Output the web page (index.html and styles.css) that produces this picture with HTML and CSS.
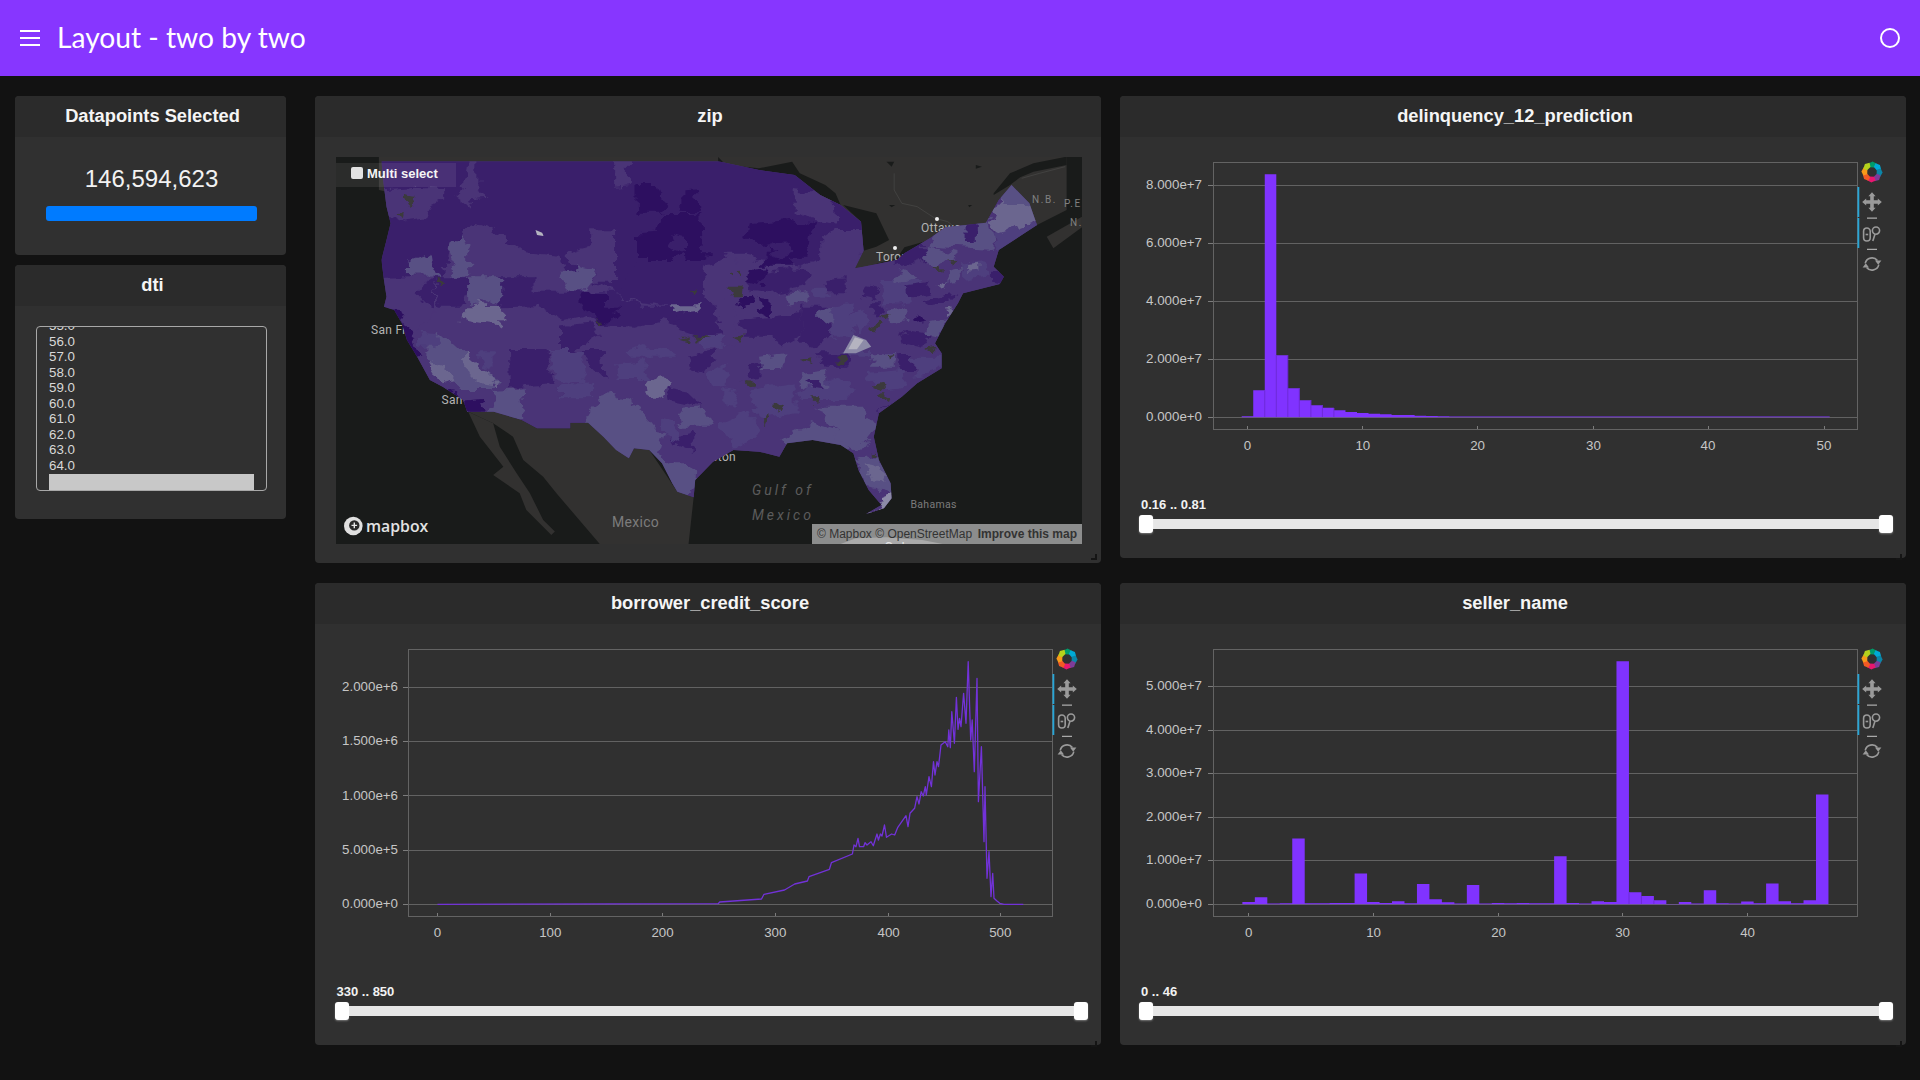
FILE: index.html
```html
<!DOCTYPE html>
<html lang="en">
<head>
<meta charset="utf-8">
<title>Layout - two by two</title>
<link rel="stylesheet" href="styles.css">
</head>
<body>
<svg class="defs" aria-hidden="true">
  <defs>
    <filter id="rough" x="0" y="0" width="1" height="1" color-interpolation-filters="sRGB">
      <feTurbulence type="fractalNoise" baseFrequency=".035" numOctaves="3" seed="7" result="n"/>
      <feDisplacementMap in="SourceGraphic" in2="n" scale="34" xChannelSelector="R" yChannelSelector="G"/>
    </filter>
    <clipPath id="usclip">
      <polygon points="140,214 800,214 880,240 950,255 1000,315 1040,345 1080,395 1085,482 1068,535 1085,530 1150,510 1165,490 1215,445 1245,412 1325,398 1350,330 1375,285 1410,340 1425,405 1350,480 1340,530 1360,560 1352,582 1280,610 1270,640 1245,700 1225,760 1238,790 1238,835 1190,880 1160,920 1115,970 1105,1040 1115,1110 1138,1180 1140,1225 1125,1255 1090,1272 1120,1245 1095,1200 1075,1140 1065,1090 1040,1065 985,1050 935,1060 920,1100 880,1085 830,1080 790,1115 755,1170 752,1222 720,1205 710,1180 690,1120 665,1080 635,1075 625,1105 600,1080 575,1040 545,998 510,998 510,1015 445,1015 415,990 360,965 308,965 300,930 260,890 235,870 210,800 190,750 180,700 165,660 145,650 150,620 145,570 140,510 150,450 158,400 150,350 145,290"/>
    </clipPath>
  </defs>
  <symbol id="toolbar" viewBox="0 0 40 130" overflow="visible">
    <rect class="tb-active" x="0" y="29" width="1.8" height="30"/>
    <rect class="tb-active" x="0" y="60" width="1.8" height="30"/>
    <rect class="tb-sep" x="9.5" y="59.6" width="10" height="1"/>
    <rect class="tb-sep" x="9.5" y="90.8" width="10" height="1"/>
    <g transform="translate(14.5 14)">
      <path fill="#009a6a" d="M-3.6-8.6 .6-10.6 4.8-8.2 2.4-4.6-2.2-4.8Z"/>
      <path fill="#00aad6" d="M-3.6-8.6 .6-10.6 4.8-8.2 2.4-4.6-2.2-4.8Z" transform="rotate(45)"/>
      <path fill="#0b86a8" d="M-3.6-8.6 .6-10.6 4.8-8.2 2.4-4.6-2.2-4.8Z" transform="rotate(90)"/>
      <path fill="#7d3c98" d="M-3.6-8.6 .6-10.6 4.8-8.2 2.4-4.6-2.2-4.8Z" transform="rotate(135)"/>
      <path fill="#e8176f" d="M-3.6-8.6 .6-10.6 4.8-8.2 2.4-4.6-2.2-4.8Z" transform="rotate(180)"/>
      <path fill="#f15a24" d="M-3.6-8.6 .6-10.6 4.8-8.2 2.4-4.6-2.2-4.8Z" transform="rotate(225)"/>
      <path fill="#f79a1a" d="M-3.6-8.6 .6-10.6 4.8-8.2 2.4-4.6-2.2-4.8Z" transform="rotate(270)"/>
      <path fill="#b5d21c" d="M-3.6-8.6 .6-10.6 4.8-8.2 2.4-4.6-2.2-4.8Z" transform="rotate(315)"/>
    </g>
    <path class="tb-icon" transform="translate(14.5 44)" d="M0-9.8 3.6-5.8H1.8V-1.8H5.8V-3.6L9.8 0 5.8 3.6V1.8H1.8V5.8H3.6L0 9.8-3.6 5.8H-1.8V1.8H-5.8V3.6L-9.8 0-5.8-3.6V-1.8H-1.8V-5.8H-3.6Z"/>
    <g class="tb-line" transform="translate(14.5 75)">
      <rect x="-8.4" y="-5" width="6.6" height="13" rx="3.3"/>
      <path d="M-6.4 1.5H-3.8"/>
      <circle cx="4" cy="-2.4" r="3.6"/>
      <path d="M3 1.2 .8 8"/>
    </g>
    <g class="tb-line" transform="translate(14.5 106)">
      <path d="M-6.8-.6A6.9 6.9 0 0 1 5.4-3.4"/>
      <path d="M6.8 .6A6.9 6.9 0 0 1-5.4 3.4"/>
      <path class="tb-icon" d="M3-3.6H9.4L6.2 .8Z"/>
      <path class="tb-icon" d="M-3 3.6H-9.4L-6.2-.8Z"/>
    </g>
  </symbol>
</svg>

<header class="topbar">
  <div class="burger"><span></span><span></span><span></span></div>
  <h1 class="app-title">Layout - two by two</h1>
  <div class="status-dot"></div>
</header>

<main class="page">
  <aside class="side">
    <section class="card card-count">
      <h2 class="card-head">Datapoints Selected</h2>
      <div class="count-body">
        <div class="count-num">146,594,623</div>
        <div class="count-bar"></div>
      </div>
    </section>
    <section class="card card-dti">
      <h2 class="card-head">dti</h2>
      <div class="dti-body">
        <div class="listbox">
          <div class="opt">55.0</div>
          <div class="opt">56.0</div>
          <div class="opt">57.0</div>
          <div class="opt">58.0</div>
          <div class="opt">59.0</div>
          <div class="opt">60.0</div>
          <div class="opt">61.0</div>
          <div class="opt">62.0</div>
          <div class="opt">63.0</div>
          <div class="opt">64.0</div>
          <div class="opt-sel"></div>
        </div>
      </div>
    </section>
  </aside>

  <div class="grid">
    <section class="card card-zip">
      <h2 class="card-head">zip</h2>
      <div class="map-body">
        <div class="map">
          <svg class="map-svg" width="746" height="387" viewBox="0 0 746 387">
            <rect class="water" width="746" height="387"/>
            <g transform="matrix(.5102 0 0 .3333 -26 -67)">
              <polygon class="land" points="135,201 1483,201 1483,360 1425,405 1240,500 1000,600 135,300"/>
              <polygon class="water" points="1340,310 1372,250 1418,220 1483,200 1483,225 1418,245 1392,262 1372,285 1340,315"/>
              <polygon class="land" points="1444,440 1513,380 1513,412 1457,475"/>
              <polygon class="water" points="800,201 815,225 880,235 945,215 960,250 1010,285 1030,310 1040,345 1000,315 950,258 880,242 800,216"/>
              <polygon class="water" points="1045,345 1110,370 1135,450 1110,470 1085,482 1080,395"/>
              <polygon class="water" points="1065,560 1085,545 1150,515 1200,475 1215,450 1165,472 1150,505 1090,530 1068,535"/>
              <polygon class="water" points="1130,215 1145,215 1140,230"/>
              <polygon class="water" points="1305,225 1317,230 1305,236"/>
              <polygon class="water" points="1135,345 1147,345 1140,352"/>
              <polygon class="water" points="1290,345 1298,345 1292,352"/>
              <path class="border" d="M1145 250V300L1160 340 1190 350 1225 385 1250 395 1258 405M1395 265 1430 250 1480 230"/>
              <polygon class="land" points="310,965 360,965 415,990 445,1015 510,1015 510,998 545,998 625,1105 635,1075 665,1080 720,1205 752,1222 742,1362 568,1362 483,1210 457,1160 418,1110 398,1040 359,1000"/>
              <polygon class="land" points="310,965 359,1000 372,1070 405,1150 431,1210 457,1290 480,1325 473,1335 424,1260 411,1210 359,1155 379,1130 333,1040"/>
              <polygon class="cuba" points="1040,1362 1070,1345 1130,1342 1200,1350 1240,1362"/>
            </g>
            <text class="ml" x="35" y="177">San Francisco</text>
            <text class="ml" x="105.6" y="247">San Diego</text>
            <text class="ml" x="585" y="75">Ottawa</text>
            <text class="ml" x="540" y="104">Toronto</text>
            <text class="ml ml-end" x="400" y="304">Houston</text>
            <text class="ml ml-big" x="276" y="370">Mexico</text>
            <text class="ml ml-sea" x="416" y="338">Gulf of</text>
            <text class="ml ml-sea" x="416" y="363">Mexico</text>
            <text class="ml ml-small" x="574.5" y="351">Bahamas</text>
            <text class="ml ml-prov" x="696" y="46">N.B.</text>
            <text class="ml ml-prov" x="728" y="50">P.E.I.</text>
            <text class="ml ml-prov" x="734" y="69">N.S.</text>
            <text class="ml ml-cuba" x="548" y="396">Cuba</text>
            <circle class="city" cx="601" cy="62" r="2"/>
            <circle class="city" cx="559" cy="91" r="2"/>
            <g transform="matrix(.5102 0 0 .3333 -26 -67)">
              <rect class="c2" x="130" y="205" width="1310" height="1075" clip-path="url(#usclip)"/>
              <g clip-path="url(#usclip)">
                <g filter="url(#rough)">
                  <rect class="c2" x="60" y="130" width="1460" height="1220"/>
                  <polygon class="c1" points="100,180 800,180 880,220 950,235 1000,295 1040,325 1120,395 1120,482 1000,510 960,530 830,490 770,540 775,600 600,605 550,575 500,545 490,500 420,490 360,420 320,400 300,432 270,470 262,560 100,565"/>
                  <polygon class="c2" points="210,290 265,295 265,320 240,340 230,385 175,395 120,350 120,300"/>
                  <polygon class="c2" points="310,200 330,200 330,300 350,320 320,325 310,350 285,320 300,300"/>
                  <polygon class="c2" points="598,200 625,200 625,285 598,290"/>
                  <polygon class="c2" points="950,300 1025,315 1030,400 985,390 950,360"/>
                  <polygon class="c2" points="1030,420 1100,420 1100,480 1060,510 1000,510 1000,450"/>
                  <polygon class="c2" points="320,400 360,420 420,490 490,500 500,545 560,540 550,600 445,605 445,560 310,560 300,432"/>
                  <polygon class="c2" points="505,490 555,470 555,418 598,418 598,575 555,575 560,540 510,525"/>
                  <polygon class="c4" points="190,515 240,488 245,540 258,560 190,560"/>
                  <polygon class="c4" points="270,470 300,432 310,490 310,560 282,560"/>
                  <polygon class="c4" points="490,545 525,540 515,525 560,540 545,600 510,605"/>
                  <polygon class="c0" points="638,282 680,282 690,320 700,345 690,368 640,368 638,330"/>
                  <polygon class="c0" points="728,298 758,295 762,370 728,368"/>
                  <polygon class="c0" points="690,372 765,372 768,490 785,490 760,515 735,520 730,490 712,510 645,510 645,430 680,425"/>
                  <polygon class="c1" points="700,430 735,440 735,490 712,480"/>
                  <polygon class="c0" points="860,400 940,390 975,405 990,395 975,500 945,500 945,530 880,530 905,490 905,460 875,465 855,440"/>
                  <polygon class="c1" points="905,465 940,460 945,495 915,500"/>
                  <polygon class="c2" points="818,488 858,488 840,525"/>
                  <polygon class="c2" points="120,565 225,562 240,640 240,690 205,720 190,720 165,660 120,650"/>
                  <polygon class="c1" points="243,562 310,562 310,605 290,650 250,650"/>
                  <polygon class="c1" points="205,600 243,562 243,650 230,640"/>
                  <polygon class="c4" points="310,562 375,562 375,645 330,628 310,650"/>
                  <polygon class="c5" points="330,625 340,648 375,648 375,710 293,690 315,650"/>
                  <polygon class="c1" points="375,562 442,562 442,652 375,655"/>
                  <polygon class="c1" points="442,605 530,605 530,660 555,670 500,690 440,640"/>
                  <polygon class="c2" points="598,605 645,605 645,650 605,650"/>
                  <polygon class="c1" points="530,605 600,605 645,650 720,650 720,700 690,690 640,710 570,705 530,660"/>
                  <polygon class="c1" points="645,510 770,510 775,600 790,650 810,700 810,730 760,740 720,720 715,650 645,640 600,605"/>
                  <polygon class="c0" points="530,605 580,605 580,650 605,650 605,680 570,705 555,670 530,660"/>
                  <polygon class="c2" points="768,600 790,600 830,650 840,760 815,770 790,640"/>
                  <polygon class="c1" points="490,710 555,700 568,740 520,780 490,780"/>
                  <polygon class="c5" points="710,646 760,646 760,665 735,670 710,656"/>
                  <polygon class="c3" points="770,735 815,735 815,778 770,778"/>
                  <polygon class="c0" points="840,618 868,618 862,650 845,655"/>
                  <polygon class="c0" points="880,620 900,625 902,680 885,670"/>
                  <polygon class="c1" points="845,690 965,670 965,740 930,770 905,740 850,740"/>
                  <polygon class="c1" points="860,555 950,535 975,540 975,590 900,610 860,600"/>
                  <polygon class="c0" points="860,540 895,535 880,585 855,575"/>
                  <polygon class="c1" points="1010,570 1050,565 1050,610 1015,610"/>
                  <polygon class="c3" points="990,590 1010,590 1015,625 990,620"/>
                  <polygon class="c1" points="965,650 1015,650 1020,740 990,770 965,760"/>
                  <polygon class="c1" points="1085,580 1115,590 1110,630 1085,620"/>
                  <polygon class="c3" points="1020,650 1070,640 1060,740 1020,740"/>
                  <polygon class="c4" points="250,720 300,790 370,880 360,900 300,900 270,850 230,810 230,770"/>
                  <polygon class="c5" points="300,785 370,885 330,880 310,850 300,820"/>
                  <polygon class="c5" points="235,815 265,830 285,870 260,880"/>
                  <polygon class="c3" points="210,725 255,730 245,770 215,770"/>
                  <polygon class="c0" points="140,655 178,660 195,720 215,790 205,800 165,730"/>
                  <polygon class="c0" points="220,900 290,910 300,935 335,930 345,965 300,965 290,925"/>
                  <polygon class="c3" points="335,790 358,790 358,840 340,830"/>
                  <polygon class="c1" points="390,780 468,780 468,830 478,880 420,885 392,895"/>
                  <polygon class="c3" points="468,780 530,780 545,880 490,870 480,860"/>
                  <polygon class="c3" points="490,880 555,880 555,925 490,925"/>
                  <polygon class="c1" points="530,780 572,780 575,860 555,830"/>
                  <polygon class="c3" points="625,780 650,765 700,780 720,800 625,800"/>
                  <polygon class="c1" points="740,800 795,780 790,810 770,850 745,835"/>
                  <polygon class="c3" points="780,850 815,820 815,890 790,895"/>
                  <polygon class="c4" points="360,900 415,895 420,985 350,985"/>
                  <polygon class="c5" points="655,870 690,855 705,880 690,925 660,910"/>
                  <polygon class="c1" points="700,895 740,905 770,950 705,930"/>
                  <polygon class="c4" points="530,1010 580,905 620,930 650,965 690,1040 680,1090 710,1120 740,1120 770,1170 730,1240 660,1120 620,1120 575,1060"/>
                  <polygon class="c1" points="705,1045 750,1030 755,1085 710,1060"/>
                  <polygon class="c3" points="690,985 720,1000 730,1060 690,1040"/>
                  <polygon class="c3" points="810,900 840,910 830,950 810,940"/>
                  <polygon class="c4" points="920,1050 985,1000 1030,1020 1060,1090 985,1070 935,1080"/>
                  <polygon class="c3" points="860,900 950,880 950,970 880,990"/>
                  <polygon class="c3" points="955,900 1040,860 1075,900 1040,930 960,930"/>
                  <polygon class="c4" points="1000,950 1080,950 1110,1010 1070,1090 1040,1060"/>
                  <polygon class="c3" points="800,1000 860,960 880,1040 830,1070"/>
                  <polygon class="c3" points="1040,780 1100,780 1095,800 1040,800"/>
                  <polygon class="c1" points="1000,790 1060,790 1055,830 1005,830"/>
                  <polygon class="c1" points="1155,795 1180,795 1180,840 1155,840"/>
                  <polygon class="c3" points="1090,850 1160,840 1170,890 1120,900"/>
                  <polygon class="c4" points="1060,1110 1110,1095 1150,1170 1150,1215 1095,1190"/>
                  <polygon class="c5" points="1085,1120 1120,1130 1130,1175 1100,1170"/>
                  <polygon class="c2" points="1080,1195 1135,1210 1125,1260 1105,1240"/>
                  <polygon class="c6" points="1118,1225 1150,1205 1145,1245 1125,1265"/>
                  <polygon class="c6" points="1080,1285 1130,1250 1130,1270"/>
                  <polygon class="c1" points="1110,975 1140,935 1120,965"/>
                  <polygon class="c5" points="1350,340 1375,265 1425,340 1425,395 1345,430 1335,395"/>
                  <polygon class="c4" points="1355,270 1425,310 1405,345 1355,345"/>
                  <polygon class="c3" points="1430,395 1440,420 1350,490 1340,430"/>
                  <polygon class="c4" points="1240,400 1330,380 1340,440 1340,480 1215,470"/>
                  <polygon class="c1" points="1285,400 1305,400 1305,450 1285,450"/>
                  <polygon class="c1" points="1150,470 1205,465 1205,510 1150,530"/>
                  <polygon class="c4" points="1210,470 1270,490 1230,540 1200,500"/>
                  <polygon class="c3" points="1120,570 1200,570 1180,640 1130,650"/>
                  <polygon class="c1" points="1160,590 1210,580 1220,610 1180,620"/>
                  <polygon class="c1" points="1205,630 1270,610 1250,640 1210,650"/>
                  <polygon class="c3" points="1280,520 1320,510 1330,560 1280,570"/>
                  <polygon class="c5" points="1290,520 1310,515 1310,545 1290,548"/>
                  <polygon class="c1" points="1335,545 1370,545 1370,590 1335,575"/>
                  <polygon class="c0" points="1180,680 1200,670 1205,700 1185,705"/>
                  <polygon class="c5" points="1240,660 1260,655 1245,682"/>
                  <polygon class="c5" points="1230,590 1250,575 1245,600"/>
                  <polygon class="c3" points="1060,680 1085,660 1095,700 1070,730"/>
                  <polygon class="c1" points="1160,720 1210,730 1200,770 1170,760"/>
                  <polygon class="c4" points="1130,660 1165,650 1170,690 1135,700"/>
                  <polygon class="c4" points="1215,700 1250,690 1235,740 1205,735"/>
                  <polygon class="c4" points="1140,560 1170,540 1185,565 1150,585"/>
                  <polygon class="c4" points="1250,540 1280,530 1270,570 1245,575"/>
                  <polygon class="c1" points="1100,640 1125,640 1120,680 1100,675"/>
                  <polygon class="c4" points="1000,660 1020,650 1025,700 1000,710"/>
                  <polygon class="c4" points="930,610 975,600 975,640 935,650"/>
                  <polygon class="c4" points="880,800 930,790 925,840 885,840"/>
                  <polygon class="c4" points="1100,790 1150,790 1145,830 1105,830"/>
                  <polygon class="c4" points="960,850 1010,840 1010,890 965,890"/>
                  <polygon class="c4" points="720,960 770,950 790,1010 730,1010"/>
                  <polygon class="c1" points="975,870 1005,870 1000,895 980,890"/>
                  <polygon class="c3" points="1180,800 1235,800 1230,850 1185,860"/>
                  <polygon class="c3" points="600,820 660,810 660,870 605,870"/>
                  <polygon class="c1" points="860,830 885,820 885,860 860,865"/>
                  <polygon class="c4" points="1150,470 1165,470 1165,490 1150,490"/>
                  <polygon class="h" points="185,315 205,320 200,350 190,345"/>
                  <polygon class="h" points="165,370 176,375 174,388"/>
                  <polygon class="h" points="248,565 256,565 256,585 250,585"/>
                  <polygon class="h" points="822,590 848,590 846,616 820,616"/>
                  <polygon class="h" points="815,545 825,545 822,560"/>
                  <polygon class="h" points="835,550 848,548 842,562"/>
                  <polygon class="h" points="742,605 758,607 752,622"/>
                  <polygon class="h" points="725,750 745,742 742,758"/>
                  <polygon class="h" points="755,735 778,740 760,752"/>
                  <polygon class="h" points="828,742 848,733 845,755"/>
                  <polygon class="h" points="1032,795 1048,795 1045,825 1032,825"/>
                  <polygon class="h" points="852,875 866,878 862,892"/>
                  <polygon class="h" points="980,925 1000,925 996,942"/>
                  <polygon class="h" points="905,940 925,935 918,965"/>
                  <polygon class="h" points="885,990 905,975 895,1005"/>
                  <polygon class="h" points="1095,710 1115,695 1108,728"/>
                  <polygon class="h" points="1120,680 1138,672 1128,695"/>
                  <polygon class="h" points="1222,535 1238,528 1238,545"/>
                  <polygon class="h" points="1252,505 1270,510 1262,525"/>
                  <polygon class="h" points="1208,772 1228,768 1224,788"/>
                  <polygon class="h" points="1100,885 1122,878 1126,905"/>
                  <polygon class="h" points="1110,915 1130,912 1125,930"/>
                  <polygon class="h" points="960,812 985,805 980,822"/>
                  <polygon class="h" points="1125,795 1148,792 1132,812"/>
                  <polygon class="h" points="562,692 576,692 574,704"/>
                  <polygon class="h" points="1100,1090 1112,1088 1110,1100"/>
                </g>
              </g>
              <polygon class="c7" points="1045,790 1065,735 1090,750 1100,770 1070,790"/>
              <polygon class="c8" points="1068,742 1085,750 1072,778 1055,778"/>
              <polygon class="c8" points="442,420 455,428 458,438 445,435"/>
            </g>
            <g transform="translate(17.3 369)">
              <circle class="mb-ring" r="9.3"/>
              <circle class="mb-in" cx="1" cy="-.6" r="5.2"/>
              <path class="mb-plus" d="M1-3.4V2.2M-1.8-.6H3.8"/>
            </g>
            <text class="mb-word" x="30" y="374.5">mapbox</text>
          </svg>
          <div class="multi"><span class="multi-box"></span><span>Multi select</span></div>
          <div class="attrib"><span>© Mapbox © OpenStreetMap</span><b>Improve this map</b></div>
        </div>
      </div>
      <div class="resize-grip"></div>
    </section>

    <section class="card card-chart">
      <h2 class="card-head">delinquency_12_prediction</h2>
      <svg class="plot" width="786" height="360" viewBox="1 0 786 360">
        <path class="grid-l" d="M94 48H738M94 106.3H738M94 164.3H738M94 222.3H738M94 280.3H738"/>
        <path class="tick-l" d="M89 48H94M89 106.3H94M89 164.3H94M89 222.3H94M89 280.3H94M128.5 289V292M243.8 289V292M358.6 289V292M474.5 289V292M589 289V292M705 289V292"/>
        <rect class="frame" x="94.5" y="25.5" width="644" height="267"/>
        <path class="bars" d="M122.7 280.3V279.3h11.53V253.3h11.53V37.3h11.53V218.3h11.53V251.3h11.53V263.3h11.53V268.3h11.53V270.7h11.53V273.3h11.53V275h11.53V276h11.53V276.7h11.53V277.3h11.53V278h11.53V278h11.53V278.7h11.53V279h11.53V279.3h11.53V279.5H710.7V280.3Z"/>
        <path class="bar-sep" d="M145.76 253.3V280M157.3 218V280M168.8 218V280M180.3 251V280M191.9 263V280M203.4 268V280M214.9 271V280"/>
        <g class="t-y">
          <text x="83" y="53">8.000e+7</text>
          <text x="83" y="111">6.000e+7</text>
          <text x="83" y="169">4.000e+7</text>
          <text x="83" y="227">2.000e+7</text>
          <text x="83" y="285">0.000e+0</text>
        </g>
        <g class="t-x">
          <text x="128.5" y="314">0</text>
          <text x="243.8" y="314">10</text>
          <text x="358.6" y="314">20</text>
          <text x="474.5" y="314">30</text>
          <text x="589" y="314">40</text>
          <text x="705" y="314">50</text>
        </g>
        <use href="#toolbar" x="738.5" y="21" width="40" height="130"/>
      </svg>
      <div class="range">
        <div class="range-label">0.16 .. 0.81</div>
        <div class="range-track"><span class="range-handle"></span><span class="range-handle"></span></div>
      </div>
      <div class="resize-grip"></div>
    </section>

    <section class="card card-chart card-left">
      <h2 class="card-head">borrower_credit_score</h2>
      <svg class="plot" width="786" height="360" viewBox="0 0 786 360">
        <path class="grid-l" d="M93 63.3H737M93 117.3H737M93 171.7H737M93 226.3H737M93 280.3H737"/>
        <path class="tick-l" d="M88 63.3H93M88 117.3H93M88 171.7H93M88 226.3H93M88 280.3H93M122.5 289V292M235.3 289V292M347.5 289V292M460.3 289V292M573.6 289V292M685.3 289V292"/>
        <rect class="frame" x="93.5" y="25.5" width="644" height="267"/>
        <path class="curve" d="M122.5 280.3 403.2 279.7 404.7 278 446.5 275 449 270.3 469.5 266 479.7 260 492.4 257 494 252.7 514.4 245.3 516.4 238.7 537.4 230 539 221 541 222.7 543 214.3 544.5 222.7 548.6 222.7 550 218.7 552 221 556 217.7 558.3 221.7 562 210 563.4 216 565.4 210 567 212 569.5 201 571.5 213.3 576.6 210 579.7 211 582.8 203.3 586.8 197.7 591 191.7 593 202.7 595 189.3 599.6 184.3 602 172.7 604 180 606.2 167.7 608.3 172 610.3 162.7 611.3 171 614 152.7 616.4 162.7 618.5 137.7 620 151 622 137.7 623.5 142.7 626 121 630.2 117.7 632.8 122.7 633.8 106 635.3 123.7 636.8 87.7 639.4 119.3 641.4 73.3 643 105.3 644.5 94.3 646 102.7 648.6 69.3 651 99.3 653.2 37.7 655.7 116 657.2 96 659.3 147.7 662 54.3 663.4 177.7 666.4 122.7 669 217.7 670 162.7 672 254.3 674 227.7 676 272.7 677.7 249.3 679 274.3 681.7 276.7 684.8 279.3 689 280.3 708.3 280.3"/>
        <g class="t-y">
          <text x="83" y="68">2.000e+6</text>
          <text x="83" y="122">1.500e+6</text>
          <text x="83" y="177">1.000e+6</text>
          <text x="83" y="231">5.000e+5</text>
          <text x="83" y="285">0.000e+0</text>
        </g>
        <g class="t-x">
          <text x="122.5" y="314">0</text>
          <text x="235.3" y="314">100</text>
          <text x="347.5" y="314">200</text>
          <text x="460.3" y="314">300</text>
          <text x="573.6" y="314">400</text>
          <text x="685.3" y="314">500</text>
        </g>
        <use href="#toolbar" x="737.5" y="21" width="40" height="130"/>
      </svg>
      <div class="range">
        <div class="range-label">330 .. 850</div>
        <div class="range-track"><span class="range-handle"></span><span class="range-handle"></span></div>
      </div>
      <div class="resize-grip"></div>
    </section>

    <section class="card card-chart">
      <h2 class="card-head">seller_name</h2>
      <svg class="plot" width="786" height="360" viewBox="1 0 786 360">
        <path class="grid-l" d="M94 62.3H738M94 106.3H738M94 149.3H738M94 193.3H738M94 236.3H738M94 280.3H738"/>
        <path class="tick-l" d="M89 62.3H94M89 106.3H94M89 149.3H94M89 193.3H94M89 236.3H94M89 280.3H94M129.6 289V292M254.6 289V292M379.6 289V292M503.6 289V292M628.6 289V292"/>
        <rect class="frame" x="94.5" y="25.5" width="644" height="267"/>
        <path class="bars" d="M123.37 280.3V278h12.47V273.3h12.47V279.6h12.47V279.3h12.47V214.6h12.47V279.3h12.47V279.3h12.47V279h12.47V279h12.47V249.6h12.47V278h12.47V279h12.47V277.3h12.47V279.3h12.47V260h12.47V275.3h12.47V278.3h12.47V279.6h12.47V261h12.47V279.6h12.47V279h12.47V279.3h12.47V279h12.47V279.3h12.47V279.3h12.47V232.3h12.47V279h12.47V279.6h12.47V277.3h12.47V278h12.47V37.3h12.47V268.3h12.47V272h12.47V276.3h12.47V279.9h12.47V278h12.47V279.6h12.47V266.3h12.47V279.3h12.47V279.6h12.47V277.6h12.47V279.3h12.47V259.6h12.47V277.3h12.47V279.3h12.47V276.3h12.47V170.6h12.47V280.3Z"/>
        <path class="bar-sep" d="M510 268.3V280M522.4 272V280M534.9 276.3V280"/>
        <g class="t-y">
          <text x="83" y="67">5.000e+7</text>
          <text x="83" y="111">4.000e+7</text>
          <text x="83" y="154">3.000e+7</text>
          <text x="83" y="198">2.000e+7</text>
          <text x="83" y="241">1.000e+7</text>
          <text x="83" y="285">0.000e+0</text>
        </g>
        <g class="t-x">
          <text x="129.6" y="314">0</text>
          <text x="254.6" y="314">10</text>
          <text x="379.6" y="314">20</text>
          <text x="503.6" y="314">30</text>
          <text x="628.6" y="314">40</text>
        </g>
        <use href="#toolbar" x="738.5" y="21" width="40" height="130"/>
      </svg>
      <div class="range">
        <div class="range-label">0 .. 46</div>
        <div class="range-track"><span class="range-handle"></span><span class="range-handle"></span></div>
      </div>
      <div class="resize-grip"></div>
    </section>
  </div>
</main>
</body>
</html>
```

FILE: styles.css
```css
* { box-sizing: border-box; }
html, body { margin: 0; height: 100%; background: #121212; overflow: hidden; }
body { font-family: "Liberation Sans", Arial, sans-serif; color: #f5f5f5; }
.defs { position: absolute; width: 0; height: 0; }

.topbar { height: 76px; background: #8736ff; display: flex; align-items: center; padding: 0 20px; }
.burger { width: 20px; display: flex; flex-direction: column; gap: 5px; }
.burger span { display: block; height: 2px; background: #fff; }
.app-title { margin: 0 0 2px 17px; font: 400 28.2px/1 Lato, sans-serif; color: #fff; flex: 1; }
.status-dot { width: 20px; height: 20px; border: 2px solid #fff; border-radius: 50%; }

.page { display: flex; gap: 29px; padding: 20px 0 0 15px; }
.side { width: 271px; display: flex; flex-direction: column; gap: 10px; }
.grid { display: grid; grid-template-columns: 786px 786px; grid-template-rows: 467px 462px; column-gap: 19px; row-gap: 20px; align-items: start; }

.card { position: relative; background: #303030; border-radius: 4px; }
.card-head { margin: 0; height: 41px; padding: 0 0 0 4px; background: #2b2b2b; border-radius: 4px 4px 0 0; font: 700 18.3px/40px "Liberation Sans", Arial, sans-serif; color: #f5f5f5; text-align: center; }
.card-zip { height: 467px; }
.card-chart { height: 462px; }

.count-body { padding: 28px 29px 34px 31px; }
.count-num { font-size: 24px; line-height: 28px; text-align: center; color: #f2f2f2; margin-bottom: 13px; }
.count-bar { height: 15px; background: #007bff; border-radius: 3px; }

.dti-body { padding: 20px 19px 28px 21px; }
.listbox { height: 165px; border: 1px solid #a8a8a8; border-radius: 4px; padding: 0 12px; display: flex; flex-direction: column; justify-content: flex-end; overflow: hidden; }
.opt { flex: none; height: 15.5px; font-size: 13.33px; line-height: 15.5px; color: #d8d8d8; }
.opt-sel { flex: none; height: 16px; margin-top: 1px; background: #c8c8c8; }

.map-body { padding: 20px 19px 19px 21px; }
.map { position: relative; width: 746px; height: 387px; overflow: hidden; }
.map-svg { display: block; }
.water { fill: #191b1a; }
.land { fill: #323130; }
.cuba { fill: #555; }
.border { fill: none; stroke: #4b4b4a; stroke-width: 1.5; }
.c0 { fill: #2d0f60; }
.c1 { fill: #3a1f6b; }
.c2 { fill: #4a3477; }
.c3 { fill: #4e3f7e; }
.c4 { fill: #585084; }
.c5 { fill: #6b668f; }
.c6 { fill: #8d8ba8; }
.c7 { fill: #8d8ba8; }
.c8 { fill: #b5b4c0; }
.h { fill: #3b3a3c; }
.ml { font: 12px Roboto, sans-serif; fill: #b4b4b4; letter-spacing: .3px; }
.ml-end { text-anchor: end; }
.ml-big { font-size: 14px; fill: #7c7c7c; }
.ml-sea { font-size: 14px; font-style: italic; fill: #5c5c5c; letter-spacing: 3px; }
.ml-small { font-size: 10.5px; fill: #7c7c7c; }
.ml-prov { font-size: 10px; fill: #808080; letter-spacing: 1.6px; }
.ml-cuba { font-size: 14px; fill: #c8c8c8; }
.city { fill: #eee; }
.mb-ring { fill: #e0e0e0; }
.mb-in { fill: #2a2a2a; }
.mb-plus { stroke: #e8e8e8; stroke-width: 1.4; fill: none; }
.mb-word { font: 600 15.8px "Open Sans", sans-serif; fill: #e2e2e2; }

.multi { position: absolute; left: 0; top: 6px; width: 120px; height: 24px; padding: 0 0 4px 15px; display: flex; align-items: center; gap: 4px; background: rgba(255, 255, 255, .08); font-size: 13px; font-weight: 700; color: #f5f5f5; }
.multi-box { width: 12px; height: 12px; background: #e2e2e2; border-radius: 2px; }
.attrib { position: absolute; right: 0; bottom: 0; height: 20px; width: 270px; padding: 0 5px; display: flex; align-items: center; justify-content: space-between; background: rgba(255, 255, 255, .5); font-size: 12px; color: #333; white-space: nowrap; }

.resize-grip { position: absolute; top: 458px; right: 4px; width: 6px; height: 6px; border-right: 2px solid #151515; border-bottom: 2px solid #151515; }

.plot { display: block; overflow: visible; }
.grid-l { fill: none; stroke: #626262; stroke-width: 1; shape-rendering: crispEdges; }
.tick-l { fill: none; stroke: #7c7c7c; stroke-width: 1; shape-rendering: crispEdges; }
.frame { fill: none; stroke: #636363; stroke-width: 1; shape-rendering: crispEdges; }
.bars { fill: #8033ff; }
.bar-sep { fill: none; stroke: #6d2ad8; stroke-width: 1; }
.curve { fill: none; stroke: #7232d8; stroke-width: 1.3; stroke-linejoin: round; }
.t-y, .t-x { transform: translateY(-1px); }
.t-y text, .t-x text { font: 13.33px "Liberation Sans", Arial, sans-serif; fill: #c6c6c6; }
.t-y text { text-anchor: end; }
.t-x text { text-anchor: middle; }
.tb-active { fill: #26a6d8; }
.tb-sep { fill: #c8c8c8; }
.tb-icon { fill: #9a9a9a; stroke: none; }
.tb-line { fill: none; stroke: #9a9a9a; stroke-width: 1.6; }

.range { padding: 0 13px 0 19px; }
.card-left .range { padding-left: 19.5px; }
.range-label { padding-left: 2px; font-size: 13px; font-weight: 700; line-height: 16px; color: #f2f2f2; margin-bottom: 6px; }
.range-track { height: 10px; background: #e6e6e6; display: flex; justify-content: space-between; align-items: center; border-radius: 2px; }
.range-handle { width: 14px; height: 18px; flex: none; background: #fff; border-radius: 3px; box-shadow: 0 1px 2px rgba(255, 255, 255, .35); }
```
